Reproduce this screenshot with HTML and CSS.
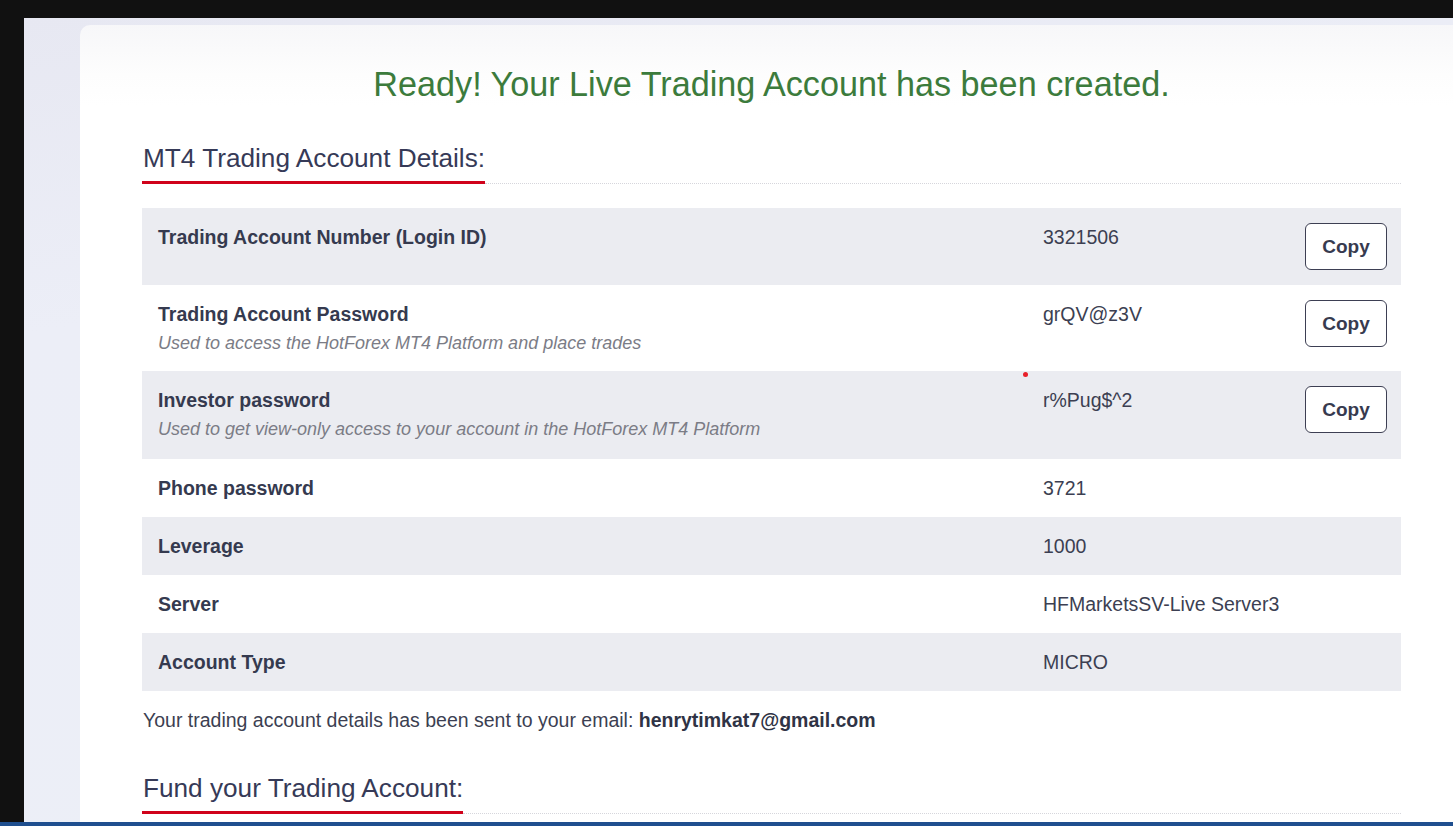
FILE: index.html
```html
<!DOCTYPE html>
<html lang="en">
<head>
<meta charset="utf-8">
<title>Live Trading Account Created</title>
<link rel="stylesheet" href="styles.css">
</head>
<body>
<div class="screen">
  <div class="frame">
    <main class="card">
      <h1 class="ready">Ready! Your Live Trading Account has been created.</h1>

      <div class="section-head">
        <h2>MT4 Trading Account Details:</h2>
        <span class="dots"></span>
      </div>

      <div class="details">
        <div class="row shaded with-btn">
          <div class="label"><strong>Trading Account Number (Login ID)</strong></div>
          <div class="value">3321506</div>
          <button class="copy" type="button">Copy</button>
        </div>
        <div class="row tall with-btn">
          <div class="label">
            <strong>Trading Account Password</strong>
            <em>Used to access the HotForex MT4 Platform and place trades</em>
          </div>
          <div class="value">grQV@z3V</div>
          <button class="copy" type="button">Copy</button>
        </div>
        <div class="row shaded taller with-btn">
          <span class="dot"></span>
          <div class="label">
            <strong>Investor password</strong>
            <em>Used to get view-only access to your account in the HotForex MT4 Platform</em>
          </div>
          <div class="value">r%Pug$^2</div>
          <button class="copy" type="button">Copy</button>
        </div>
        <div class="row">
          <div class="label"><strong>Phone password</strong></div>
          <div class="value">3721</div>
        </div>
        <div class="row shaded">
          <div class="label"><strong>Leverage</strong></div>
          <div class="value">1000</div>
        </div>
        <div class="row">
          <div class="label"><strong>Server</strong></div>
          <div class="value">HFMarketsSV-Live Server3</div>
        </div>
        <div class="row shaded">
          <div class="label"><strong>Account Type</strong></div>
          <div class="value">MICRO</div>
        </div>
      </div>

      <p class="sent">Your trading account details has been sent to your email: <strong>henrytimkat7@gmail.com</strong></p>

      <div class="section-head fund">
        <h2>Fund your Trading Account:</h2>
        <span class="dots"></span>
      </div>
    </main>
  </div>
  <div class="bottom-bar"></div>
</div>
</body>
</html>
```

FILE: styles.css
```css
* { box-sizing: border-box; }

html, body {
  margin: 0;
  padding: 0;
  height: 100%;
}

body {
  background: #111111;
  font-family: "Liberation Sans", Arial, sans-serif;
  color: #363a4e;
  overflow: hidden;
}

.screen {
  height: 826px;
  display: flex;
  flex-direction: column;
  padding-top: 18px;
}

.frame {
  flex: 1;
  margin-left: 24px;
  background: linear-gradient(170deg, #e7e8f2 0%, #eceef7 30%, #eceff7 100%);
  padding: 7px 0 0 56px;
  overflow: hidden;
  display: flex;
}

.card {
  flex: 1;
  background: linear-gradient(to bottom, #f7f7f9 0px, #fdfdfd 50px, #ffffff 80px);
  border-top-left-radius: 10px;
  padding: 41px 52px 0 62px;
}

.ready {
  margin: 0;
  font-size: 34.2px;
  line-height: 1.1;
  font-weight: normal;
  color: #3c7b3c;
  text-align: center;
}

.section-head {
  display: flex;
  align-items: flex-end;
  margin-top: 39px;
}

.section-head h2 {
  margin: 0;
  font-size: 26.2px;
  line-height: 1.2;
  font-weight: normal;
  color: #363a57;
  padding: 0 0 7px 1px;
  border-bottom: 3px solid #d0021b;
}

.section-head .dots {
  flex: 1;
  border-bottom: 1px dotted #d6d6dc;
}

.section-head.fund {
  margin-top: 39px;
}

.details {
  margin-top: 24px;
}

.row {
  position: relative;
  display: grid;
  grid-template-columns: 885px 1fr auto;
  align-items: start;
  padding: 15px 14px 15px 16px;
  font-size: 19.5px;
  line-height: 28px;
  min-height: 58px;
}

.row.shaded {
  background: #ebecf1;
}

.row.tall {
  padding-bottom: 14px;
}

.row.taller {
  padding-bottom: 16px;
}

.label strong {
  display: block;
  font-weight: bold;
  color: #353a4f;
}

.label em {
  display: block;
  margin-top: 1px;
  font-size: 18px;
  line-height: 28px;
  color: #7b7c86;
}

.value {
  color: #3c3f52;
}

.copy {
  width: 82px;
  height: 47px;
  background: #ffffff;
  border: 1px solid #3d3f53;
  border-radius: 6px;
  font-family: "Liberation Sans", Arial, sans-serif;
  font-size: 19px;
  font-weight: bold;
  color: #373a4f;
  padding: 0;
  cursor: pointer;
}

.dot {
  position: absolute;
  left: 881px;
  top: 1px;
  width: 5px;
  height: 5px;
  border-radius: 50%;
  background: #e8202a;
}

.sent {
  margin: 15px 0 0 1px;
  font-size: 19.5px;
  line-height: 28px;
  color: #3c3f52;
}

.sent strong {
  color: #2f3345;
}

.bottom-bar {
  height: 4px;
  background: #1f4f8f;
  flex: none;
}
```
